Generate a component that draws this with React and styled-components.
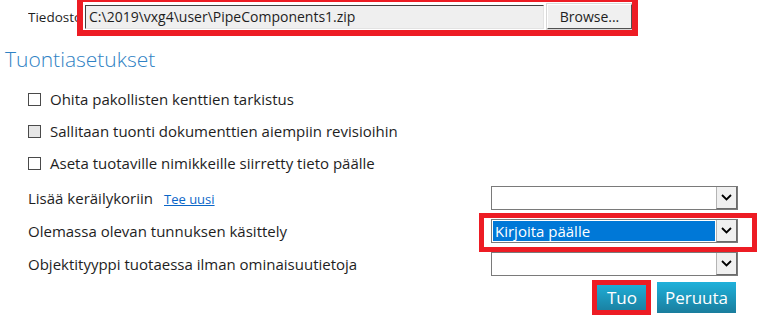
import React from "react";
import styled, { createGlobalStyle } from "styled-components";

const GlobalStyle = createGlobalStyle`
    body {
        margin: 0;
        background: #ffffff;
        font-family: "Segoe UI", "Open Sans", "Noto Sans", sans-serif;
        color: #1e1e1e;
    }
`

const Page = styled.div`
    width: 784px;
    height: 328px;
    overflow: hidden;
    box-sizing: border-box;
`

const FileRow = styled.div`
    display: flex;
    align-items: center;
    padding: 4px 0 0 28px;
    height: 25px;
`

const FileLabel = styled.span`
    width: 57px;
    overflow: hidden;
    white-space: nowrap;
    font-size: 13.5px;
`

const Marked = styled.div`
    position: relative;
    display: flex;
    align-items: center;
    gap: ${p => p.$gap || 0}px;
`

const RedBox = styled.div`
    position: absolute;
    top: ${p => p.$t}px;
    left: ${p => p.$l}px;
    right: ${p => p.$r}px;
    bottom: ${p => p.$b}px;
    border: ${p => p.$w || 5}px solid #ed1c24;
    pointer-events: none;
`

const PathInput = styled.div`
    width: 454px;
    height: 22px;
    background: #efefef;
    border-top: 1px solid #404040;
    border-left: 1px solid #404040;
    border-bottom: 1px solid #e3e3e3;
    border-right: 1px solid #e3e3e3;
    font-size: 14px;
    line-height: 22px;
    padding-left: 3px;
    white-space: nowrap;
`

const BrowseButton = styled.div`
    width: 83px;
    height: 23px;
    background: #f0f0f0;
    border-top: 1px solid #ffffff;
    border-left: 1px solid #ffffff;
    border-bottom: 1px solid #505050;
    border-right: 1px solid #505050;
    box-shadow: 0 0 0 1px #d8d8d8;
    font-size: 14px;
    text-align: center;
    line-height: 23px;
`

const Heading = styled.h2`
    margin: 13px 0 0 5px;
    height: 34px;
    font-size: 21px;
    font-weight: 300;
    color: #2f82c4;
    line-height: 34px;
`

const Options = styled.div`
    padding: 7px 0 0 28px;
    display: flex;
    flex-direction: column;
`

const CheckRow = styled.label`
    display: flex;
    align-items: center;
    gap: 9px;
    height: 32px;
    font-size: 15px;
`

const Box = styled.span`
    width: 11px;
    height: 11px;
    border: 1px solid #4a4a4a;
    background: ${p => (p.$disabled ? "#e6e6e6" : "#ffffff")};
    flex-shrink: 0;
`

const FieldRow = styled.div`
    display: grid;
    grid-template-columns: 463px 247px;
    align-items: center;
    height: 33px;
    font-size: 15px;
    &:first-of-type {
        margin-top: 2px;
    }
`

const LabelText = styled.span`
    display: flex;
    align-items: baseline;
    gap: 11px;
`

const NewLink = styled.a`
    font-size: 13px;
    color: #0a66c8;
    text-decoration: underline;
`

const Select = styled.div`
    display: flex;
    height: 24px;
    box-sizing: border-box;
    border: 1px solid #7a7a7a;
    background: #ffffff;
`

const SelectValue = styled.div`
    flex: 1;
    margin: 1px;
    padding-left: 2px;
    font-size: 15px;
    line-height: 20px;
    background: ${p => (p.$selected ? "#0078d7" : "transparent")};
    color: ${p => (p.$selected ? "#ffffff" : "#000000")};
`

const DropButton = styled.div`
    width: 19px;
    display: flex;
    align-items: center;
    justify-content: center;
    background: #f0f0f0;
    border-left: 1px solid #b4b4b4;
    border-right: 1px solid #6a6a6a;
    border-bottom: 1px solid #6a6a6a;
`

const Actions = styled.div`
    display: flex;
    justify-content: flex-end;
    gap: 9px;
    padding: 2px 48px 0 0;
`

const ActionButton = styled.div`
    height: 31px;
    padding: 0 ${p => p.$pad}px;
    display: flex;
    align-items: center;
    background: linear-gradient(#1fb1db, #1a7d9d);
    color: #ffffff;
    font-size: 17px;
`

const Chevron = () => (
    <svg width="11" height="7" viewBox="0 0 11 7">
        <polyline points="1,1 5.5,5.5 10,1" fill="none" stroke="#000" strokeWidth="1.8" />
    </svg>
)

function Dropdown({ value, selected }) {
    return (
        <Select>
            <SelectValue $selected={selected}>{value}</SelectValue>
            <DropButton><Chevron /></DropButton>
        </Select>
    )
}

export default function App() {
    return (
        <Page>
            <GlobalStyle />
            <FileRow>
                <FileLabel>Tiedosto</FileLabel>
                <Marked $gap={3}>
                    <PathInput>C:\2019\vxg4\user\PipeComponents1.zip</PathInput>
                    <BrowseButton>Browse...</BrowseButton>
                    <RedBox $t={-8} $l={-8} $r={-6} $b={-7} $w={6} />
                </Marked>
            </FileRow>
            <Heading>Tuontiasetukset</Heading>
            <Options>
                <CheckRow><Box />Ohita pakollisten kenttien tarkistus</CheckRow>
                <CheckRow><Box $disabled />Sallitaan tuonti dokumenttien aiempiin revisioihin</CheckRow>
                <CheckRow><Box />Aseta tuotaville nimikkeille siirretty tieto päälle</CheckRow>
                <FieldRow>
                    <LabelText>Lisää keräilykoriin <NewLink>Tee uusi</NewLink></LabelText>
                    <Dropdown value="" />
                </FieldRow>
                <FieldRow>
                    <LabelText>Olemassa olevan tunnuksen käsittely</LabelText>
                    <Marked>
                        <div style={{ width: "100%" }}><Dropdown value="Kirjoita päälle" selected /></div>
                        <RedBox $t={-6} $l={-12} $r={-19} $b={-9} />
                    </Marked>
                </FieldRow>
                <FieldRow>
                    <LabelText>Objektityyppi tuotaessa ilman ominaisuutietoja</LabelText>
                    <Dropdown value="" />
                </FieldRow>
            </Options>
            <Actions>
                <Marked>
                    <ActionButton $pad={11}>Tuo</ActionButton>
                    <RedBox $t={-2} $l={-4} $r={-3} $b={-2} />
                </Marked>
                <ActionButton $pad={8}>Peruuta</ActionButton>
            </Actions>
        </Page>
    )
}
